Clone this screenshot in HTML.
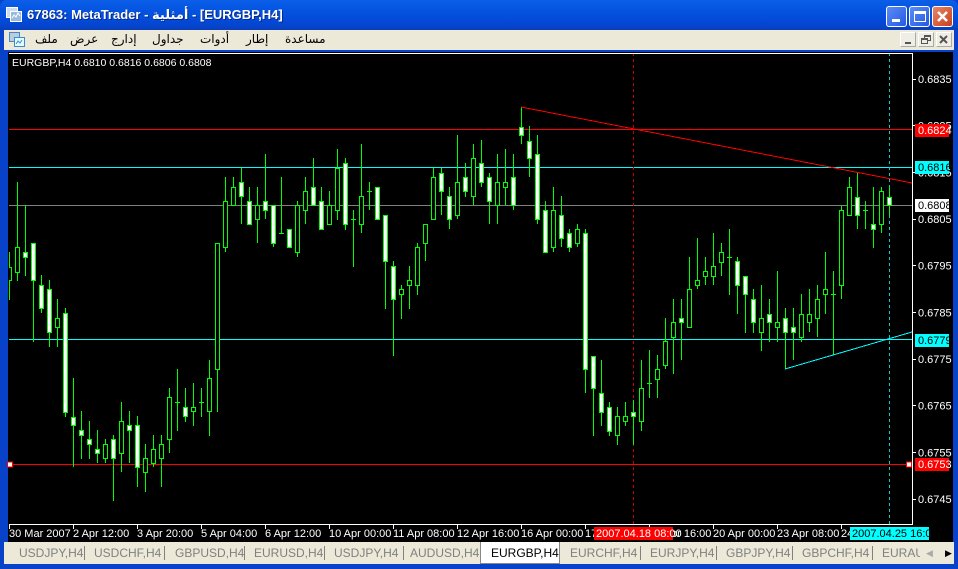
<!DOCTYPE html>
<html><head><meta charset="utf-8">
<style>
*{margin:0;padding:0;box-sizing:border-box}
body{width:958px;height:569px;overflow:hidden;background:#0842c8;font-family:"Liberation Sans",sans-serif;position:relative}
#title{position:absolute;left:0;top:0;width:958px;height:30px;background:linear-gradient(#0a5fe8,#0453e0 40%,#0347d4 80%,#0a3fb8);border-radius:7px 7px 0 0}
#title .t{position:absolute;left:27px;top:7px;color:#fff;font:bold 13px "Liberation Sans","DejaVu Sans",sans-serif;text-shadow:1px 1px #0a2a80}
.wb{position:absolute;top:6px;width:21px;height:21px;border:1px solid #fff;border-radius:3px;background:linear-gradient(135deg,#5b8cf8,#2459e0)}
#menu{position:absolute;left:4px;top:30px;width:950px;height:20px;background:#ece9d8}
#menu span{position:absolute;top:2px;font:12px "DejaVu Sans",sans-serif;color:#000}
.sb{position:absolute;top:32px;width:16px;height:15px;background:#f0eee4;border:1px solid #fff;border-right-color:#aaa;border-bottom-color:#aaa}
#chart{position:absolute;left:8px;top:52px;width:945px;height:490px;background:#000}
#tabs{position:absolute;left:4px;top:542px;width:950px;height:22px;background:#ece9d8}
#tabs span{position:absolute;top:4px;font:12px "Liberation Sans",sans-serif;color:#808080}
#tabs i{position:absolute;top:4px;width:1px;height:14px;background:#808080}
</style></head><body>
<div id="title">
<svg style="position:absolute;left:6px;top:7px" width="16" height="16"><rect x="0.5" y="0.5" width="11" height="10" fill="#cde" stroke="#fff"/><rect x="4.5" y="4.5" width="11" height="10" fill="#9bd" stroke="#fff"/><path d="M6 11l2-3 2 2 2-4 2 3" stroke="#fff" fill="none"/></svg>
<div class="t">67863: MetaTrader - <span style="font-family:'DejaVu Sans',sans-serif">أمثلية</span> - [EURGBP,H4]</div>
<div class="wb" style="left:886px"><div style="position:absolute;left:5px;top:12px;width:8px;height:3px;background:#fff"></div></div>
<div class="wb" style="left:909px"><div style="position:absolute;left:4px;top:4px;width:12px;height:11px;border:1px solid #fff;border-top-width:3px"></div></div>
<div class="wb" style="left:932px;background:linear-gradient(135deg,#e8866a,#c8401c)"><svg width="19" height="19"><path d="M5 5l9 9M14 5l-9 9" stroke="#fff" stroke-width="2.5"/></svg></div>
</div>
<div id="menu">
<svg style="position:absolute;left:4px;top:1px" width="18" height="18"><rect x="1.5" y="1.5" width="10" height="9" fill="#bcd" stroke="#48c"/><rect x="6.5" y="6.5" width="10" height="9" fill="#dff" stroke="#48c"/><path d="M8 13l2-3 2 2 2-3" stroke="#48c" fill="none"/></svg>
<span style="left:31px">ملف</span><span style="left:66px">عرض</span><span style="left:107px">إدارج</span><span style="left:148px">جداول</span><span style="left:196px">أدوات</span><span style="left:242px">إطار</span><span style="left:281px">مساعدة</span>
</div>
<div class="sb" style="left:900px"><div style="position:absolute;left:4px;top:9px;width:6px;height:2px;background:#555"></div></div>
<div class="sb" style="left:918px"><div style="position:absolute;left:5px;top:2px;width:7px;height:6px;border:1px solid #555;border-top-width:2px"></div><div style="position:absolute;left:2px;top:5px;width:7px;height:6px;border:1px solid #555;border-top-width:2px;background:#f0eee4"></div></div>
<div class="sb" style="left:936px"><svg width="14" height="13"><path d="M3 3l7 7M10 3l-7 7" stroke="#555" stroke-width="2"/></svg></div>
<div id="chart"></div>
<svg id="sv" style="position:absolute;left:0;top:0" width="958" height="569" font-family="Liberation Sans,sans-serif" font-size="11"></svg>
<div id="tabs">
<span style="left:15px">USDJPY,H4</span><i style="left:80px"></i>
<span style="left:90px">USDCHF,H4</span><i style="left:160px"></i>
<span style="left:171px">GBPUSD,H4</span><i style="left:240px"></i>
<span style="left:250px">EURUSD,H4</span><i style="left:320px"></i>
<span style="left:330px">USDJPY,H4</span><i style="left:399px"></i>
<span style="left:406px">AUDUSD,H4</span>
<div style="position:absolute;left:476px;top:0;width:80px;height:22px;background:#fff;border:1px solid #888;border-top:none"></div>
<span style="left:487px;color:#000">EURGBP,H4</span>
<span style="left:566px">EURCHF,H4</span><i style="left:636px"></i>
<span style="left:646px">EURJPY,H4</span><i style="left:712px"></i>
<span style="left:722px">GBPJPY,H4</span><i style="left:788px"></i>
<span style="left:798px">GBPCHF,H4</span><i style="left:868px"></i>
<span style="left:878px;width:38px;overflow:hidden;white-space:nowrap">EURAUD,H4</span>
<span style="left:922px;font-size:9px;color:#aaa;top:6px">◀</span><span style="left:941px;font-size:9px;color:#000;top:6px">▶</span>
</div>
<script>
var c=[[9,267,280,252,300,'h'],[17,247,272,182,281,'h'],[25,252,257,205,276,'w'],[33,243,280,243,342,'w'],[41,285,308,275,313,'w'],[49,289,332,280,347,'w'],[57,318,327,299,347,'h'],[65,313,412,308,417,'w'],[73,417,425,378,467,'w'],[81,430,435,411,459,'w'],[89,439,444,421,459,'w'],[97,449,453,430,463,'w'],[105,444,458,439,463,'h'],[113,439,458,435,501,'w'],[121,421,453,402,472,'h'],[129,425,430,411,463,'w'],[137,425,467,416,487,'w'],[145,458,472,444,492,'h'],[153,449,463,435,467,'h'],[161,444,458,435,487,'h'],[169,397,439,388,453,'h'],[177,402,402,369,431,'d'],[185,407,416,388,422,'w'],[193,407,411,383,426,'h'],[201,402,402,388,417,'d'],[209,378,411,360,436,'h'],[217,243,369,243,412,'h'],[225,201,247,177,252,'h'],[233,187,205,177,205,'h'],[241,182,196,168,224,'w'],[249,201,224,187,224,'w'],[257,205,219,187,243,'h'],[265,201,210,154,219,'w'],[273,205,243,205,247,'w'],[281,233,233,177,233,'d'],[289,229,247,229,247,'w'],[297,205,252,201,257,'h'],[305,191,210,177,224,'h'],[313,187,205,158,205,'w'],[321,201,229,187,229,'w'],[329,205,224,191,224,'h'],[337,168,210,149,220,'h'],[345,163,224,158,230,'w'],[353,219,219,210,267,'d'],[361,196,224,144,233,'h'],[369,191,191,182,210,'d'],[377,187,219,187,219,'w'],[385,215,261,215,309,'w'],[393,266,299,261,356,'w'],[401,289,294,285,319,'h'],[409,280,285,266,309,'h'],[417,247,285,243,295,'h'],[425,224,243,224,261,'h'],[433,177,219,168,219,'h'],[441,173,191,168,215,'w'],[449,196,219,187,229,'w'],[457,182,215,135,219,'h'],[465,177,191,163,197,'w'],[473,158,196,144,205,'h'],[481,163,182,140,187,'w'],[489,177,201,173,224,'w'],[497,182,205,154,224,'h'],[505,182,187,149,205,'h'],[513,177,205,154,210,'w'],[521,127,135,107,144,'w'],[529,141,158,126,177,'w'],[537,154,219,135,224,'w'],[545,210,252,201,252,'w'],[553,210,247,187,252,'h'],[561,215,238,196,247,'w'],[569,233,247,229,252,'w'],[577,229,243,224,247,'h'],[585,233,369,229,393,'w'],[593,356,388,356,436,'w'],[601,393,412,360,426,'w'],[609,407,431,402,436,'w'],[617,416,435,407,445,'h'],[625,416,421,402,426,'h'],[633,412,416,400,445,'w'],[641,388,421,360,431,'h'],[649,383,383,350,398,'d'],[657,369,379,355,398,'h'],[665,341,365,318,369,'h'],[673,322,337,299,374,'h'],[681,318,322,299,360,'w'],[689,289,327,257,327,'h'],[697,280,285,238,289,'h'],[705,271,276,257,285,'h'],[713,266,276,233,285,'h'],[721,252,262,243,276,'h'],[729,257,257,229,295,'d'],[737,261,285,257,314,'w'],[745,276,294,276,333,'w'],[753,299,322,289,333,'w'],[761,318,332,285,351,'h'],[769,314,322,299,342,'w'],[777,322,327,271,342,'h'],[785,318,332,308,369,'w'],[793,327,332,308,360,'w'],[801,314,337,294,342,'h'],[809,314,322,289,332,'h'],[817,299,318,285,337,'h'],[825,289,294,252,314,'h'],[833,294,294,271,355,'d'],[841,210,285,206,299,'h'],[849,187,215,177,215,'h'],[857,197,215,173,229,'w'],[865,210,210,201,229,'d'],[873,224,229,187,248,'w'],[881,191,224,187,233,'h'],[889,197,205,187,215,'w']];
var s='<defs><clipPath id="cp"><rect x="9" y="53" width="903" height="471"/></clipPath></defs>';
s+='<g clip-path="url(#cp)" shape-rendering="crispEdges">';
s+='<line x1="9" y1="129.5" x2="912" y2="129.5" stroke="#f00"/><line x1="9" y1="167.5" x2="912" y2="167.5" stroke="#0ff"/><line x1="9" y1="205.5" x2="912" y2="205.5" stroke="#808080"/><line x1="9" y1="339.5" x2="912" y2="339.5" stroke="#0ff"/><line x1="9" y1="464.5" x2="912" y2="464.5" stroke="#f00"/>';
s+='<line x1="633.5" y1="53" x2="633.5" y2="524" stroke="#c00" stroke-dasharray="3,3"/><line x1="889.5" y1="53" x2="889.5" y2="524" stroke="#0cc" stroke-dasharray="3,3"/>';
c.forEach(function(k){var x=k[0];s+='<line x1="'+(x+.5)+'" y1="'+k[3]+'" x2="'+(x+.5)+'" y2="'+k[4]+'" stroke="#0f0"/>';
if(k[5]=='d')s+='<line x1="'+(x-2)+'" y1="'+(k[1]+.5)+'" x2="'+(x+3)+'" y2="'+(k[1]+.5)+'" stroke="#0f0"/>';
else s+='<rect x="'+(x-1.5)+'" y="'+(k[1]+.5)+'" width="4" height="'+Math.max(k[2]-k[1],2)+'" fill="'+(k[5]=='w'?'#fff':'#000')+'" stroke="#0f0"/>';});
s+='<line x1="521" y1="107" x2="912" y2="183" stroke="#f00"/><line x1="785" y1="369" x2="912" y2="332" stroke="#0ff"/>';
s+='</g>';
s+='<g shape-rendering="crispEdges"><rect x="7.5" y="462" width="5" height="5" fill="#fff" stroke="#f00"/><rect x="906.5" y="462" width="5" height="5" fill="#fff" stroke="#f00"/>';
s+='<path d="M9 53.5H912.5V524.5H9" stroke="#fff" fill="none"/></g>';
s+='<text x="12" y="66" fill="#fff" font-size="10.5">EURGBP,H4  0.6810 0.6816 0.6806 0.6808</text>';
var p=['0.6835','0.6825','0.6815','0.6805','0.6795','0.6785','0.6775','0.6765','0.6755','0.6745'];
p.forEach(function(t,i){var y=79+i*46.67;s+='<line x1="912" y1="'+(y|0)+'.5" x2="916" y2="'+(y|0)+'.5" stroke="#fff" shape-rendering="crispEdges"/><text x="918" y="'+(y+4)+'" fill="#fff">'+t+'</text>';});
[[130,'0.6824','#f00','#fff'],[167,'0.6816','#0ff','#000'],[205,'0.6808','#fff','#000'],[340,'0.6779','#0ff','#000'],[464,'0.6753','#f00','#fff']].forEach(function(l){s+='<rect x="915" y="'+(l[0]-6)+'" width="34" height="13" fill="'+l[2]+'"/><text x="918" y="'+(l[0]+4)+'" fill="'+l[3]+'">'+l[1]+'</text>';});
var tl=['30 Mar 2007','2 Apr 12:00','3 Apr 20:00','5 Apr 04:00','6 Apr 12:00','10 Apr 00:00','11 Apr 08:00','12 Apr 16:00','16 Apr 00:00','17 Apr 08:00','18 Apr 16:00','20 Apr 00:00','23 Apr 08:00','24 Apr 16:00'];
tl.forEach(function(t,i){var x=9+i*64;s+='<line x1="'+(x+.5)+'" y1="524" x2="'+(x+.5)+'" y2="529" stroke="#fff"/><text x="'+x+'" y="537" fill="#fff">'+t+'</text>';});
s+='<rect x="594" y="527" width="79" height="13" fill="#f00"/><text x="596" y="537" fill="#fff">2007.04.18 08:00</text>';
s+='<rect x="850" y="527" width="79" height="13" fill="#0ff"/><text x="852" y="537" fill="#000">2007.04.25 16:00</text>';
document.getElementById('sv').innerHTML=s;
</script>
</body></html>
